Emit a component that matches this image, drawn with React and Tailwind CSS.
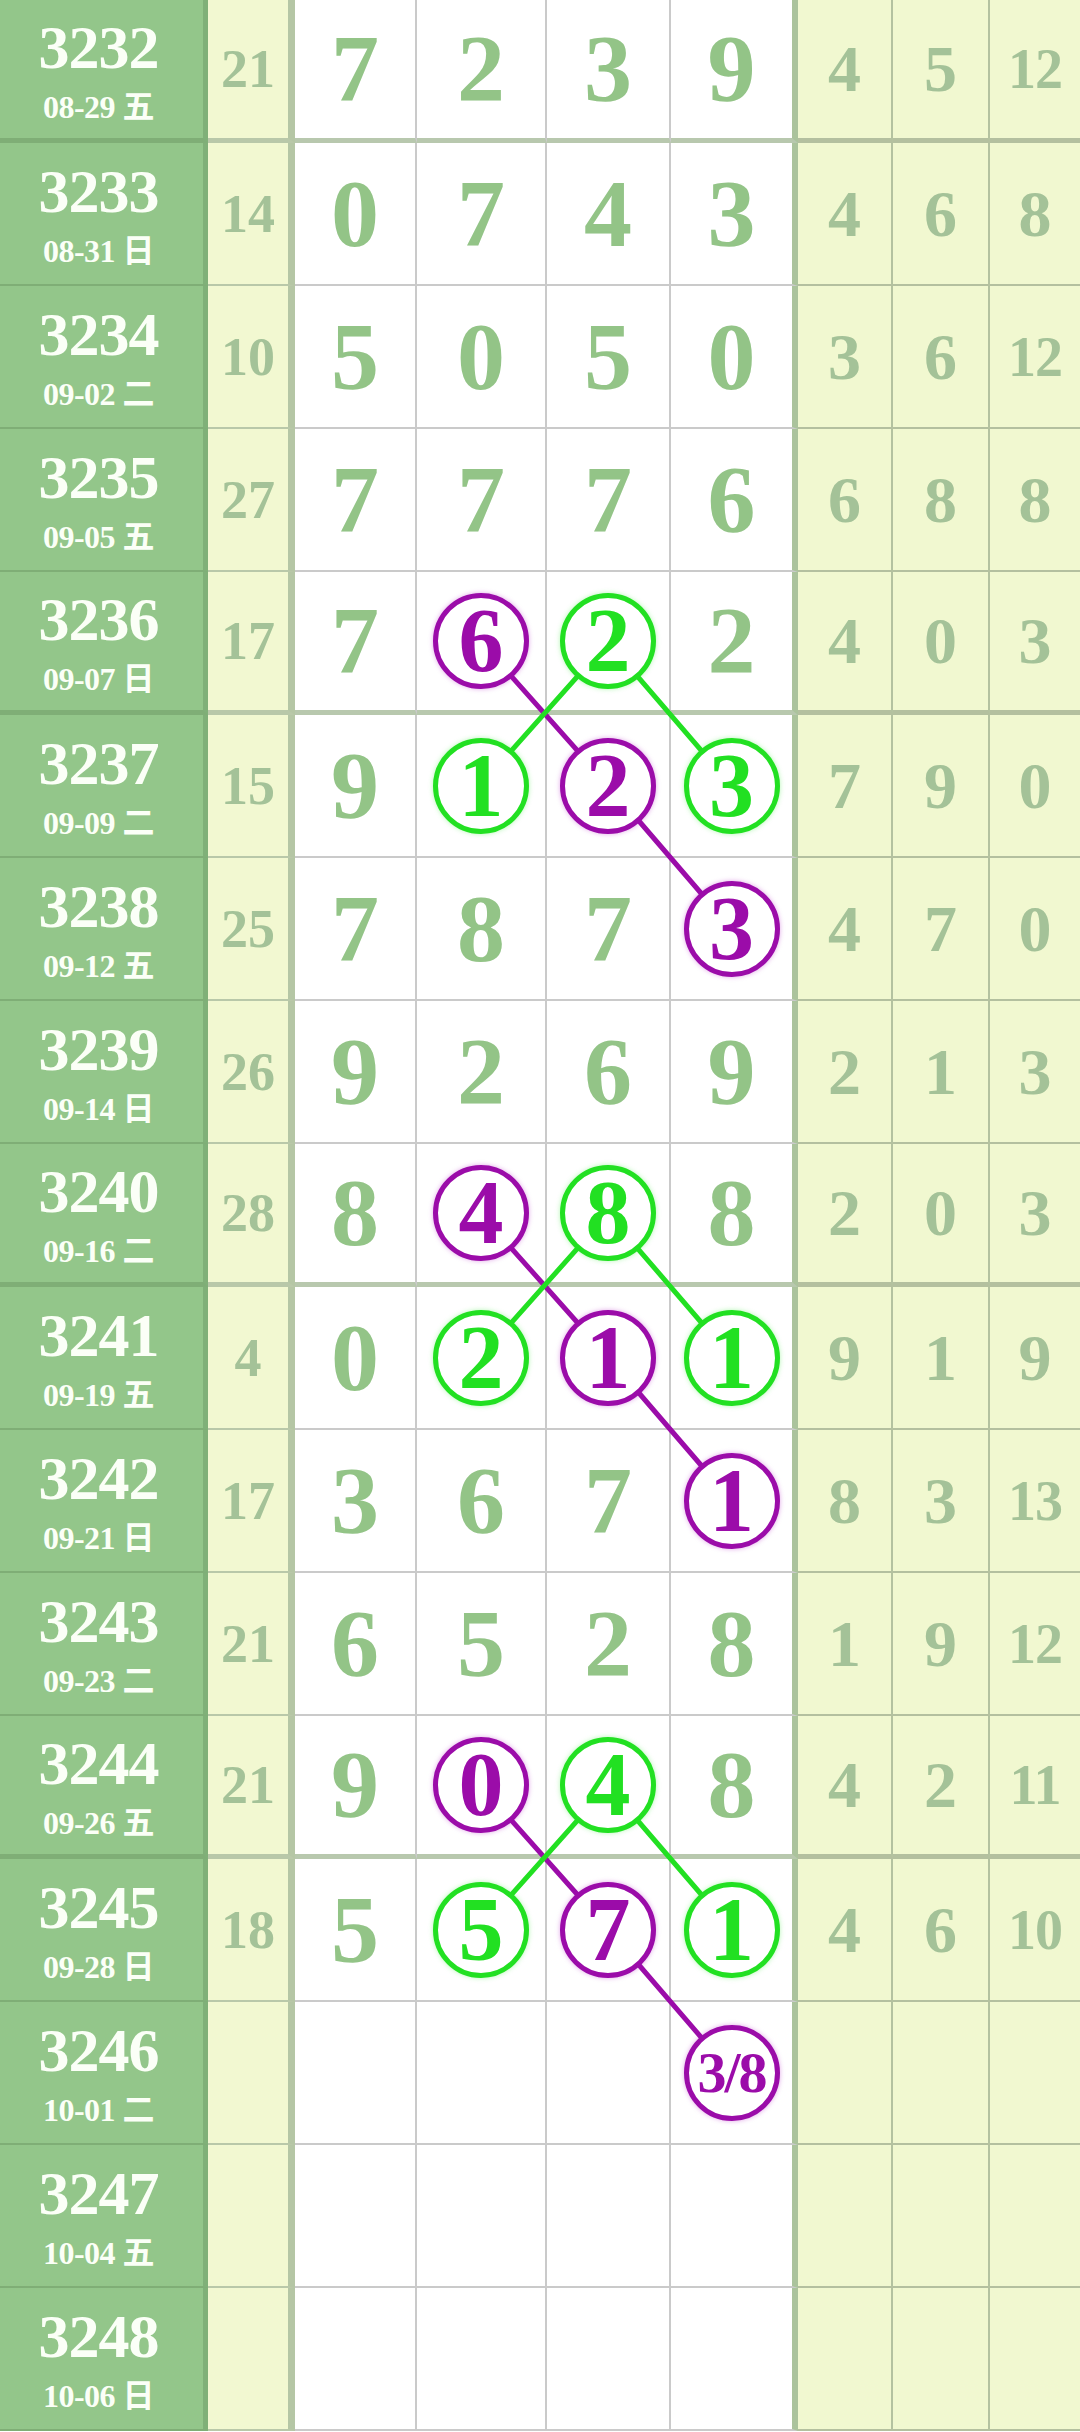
import React from 'react';

const rows = [
  { id: '3232', date: '08-29', wd: '五', sum: 21, d: [7, 2, 3, 9], e: [4, 5, 12] },
  { id: '3233', date: '08-31', wd: '日', sum: 14, d: [0, 7, 4, 3], e: [4, 6, 8] },
  { id: '3234', date: '09-02', wd: '二', sum: 10, d: [5, 0, 5, 0], e: [3, 6, 12] },
  { id: '3235', date: '09-05', wd: '五', sum: 27, d: [7, 7, 7, 6], e: [6, 8, 8] },
  { id: '3236', date: '09-07', wd: '日', sum: 17, d: [7, 6, 2, 2], e: [4, 0, 3] },
  { id: '3237', date: '09-09', wd: '二', sum: 15, d: [9, 1, 2, 3], e: [7, 9, 0] },
  { id: '3238', date: '09-12', wd: '五', sum: 25, d: [7, 8, 7, 3], e: [4, 7, 0] },
  { id: '3239', date: '09-14', wd: '日', sum: 26, d: [9, 2, 6, 9], e: [2, 1, 3] },
  { id: '3240', date: '09-16', wd: '二', sum: 28, d: [8, 4, 8, 8], e: [2, 0, 3] },
  { id: '3241', date: '09-19', wd: '五', sum: 4, d: [0, 2, 1, 1], e: [9, 1, 9] },
  { id: '3242', date: '09-21', wd: '日', sum: 17, d: [3, 6, 7, 1], e: [8, 3, 13] },
  { id: '3243', date: '09-23', wd: '二', sum: 21, d: [6, 5, 2, 8], e: [1, 9, 12] },
  { id: '3244', date: '09-26', wd: '五', sum: 21, d: [9, 0, 4, 8], e: [4, 2, 11] },
  { id: '3245', date: '09-28', wd: '日', sum: 18, d: [5, 5, 7, 1], e: [4, 6, 10] },
  { id: '3246', date: '10-01', wd: '二', sum: null, d: [], e: [] },
  { id: '3247', date: '10-04', wd: '五', sum: null, d: [], e: [] },
  { id: '3248', date: '10-06', wd: '日', sum: null, d: [], e: [] },
];

// circled digits: row-col -> [colour, text]
const marks = {
  '4-1': ['p', '6'], '4-2': ['g', '2'],
  '5-1': ['g', '1'], '5-2': ['p', '2'], '5-3': ['g', '3'],
  '6-3': ['p', '3'],
  '8-1': ['p', '4'], '8-2': ['g', '8'],
  '9-1': ['g', '2'], '9-2': ['p', '1'], '9-3': ['g', '1'],
  '10-3': ['p', '1'],
  '12-1': ['p', '0'], '12-2': ['g', '4'],
  '13-1': ['g', '5'], '13-2': ['p', '7'], '13-3': ['g', '1'],
  '14-3': ['p', '3/8'],
};

const PURPLE = '#9b0ca9';
const GREEN = '#22e022';
const colX = [355, 481, 608, 731];
const rowY = (r) => r * 143 + 70;

const digitCols = [
  'w-[122px] border-r-2 border-r-[#cacaca]',
  'w-[130px] border-r-2 border-r-[#cacaca]',
  'w-[124px] border-r-2 border-r-[#cacaca]',
  'w-[127px] border-r-[6px] border-r-[#abc39c]',
];
const extraCols = [
  'w-[95px] border-r-2 border-r-[#b4c2a0]',
  'w-[97px] border-r-2 border-r-[#b4c2a0]',
  'w-[90px]',
];

function Mark({ kind, text }) {
  const purple = kind === 'p';
  return (
    <div
      className={
        'relative z-[2] flex h-[96px] w-[96px] items-center justify-center rounded-full border-[5px] bg-white leading-none ' +
        (purple
          ? 'border-[#9b0ca9] text-[#9b0ca9] shadow-[0_0_5px_rgba(170,0,190,0.35)]'
          : 'border-[#22e022] text-[#22e022] shadow-[0_0_5px_rgba(40,230,40,0.35)]') +
        (text.length > 1 ? ' text-[58px] tracking-[-2px]' : ' text-[90px]')
      }
    >
      {text}
    </div>
  );
}

function Row({ row, r }) {
  const thick = r % 4 === 0 && r < 13;
  const bw = thick ? 'border-b-[5px]' : 'border-b-2';
  return (
    <div className="flex h-[143px]">
      <div className={`flex w-[208px] flex-col items-center justify-center border-r-[5px] border-r-[#80b078] bg-[#93c68a] pr-[6px] text-[#fbfff7] ${bw} border-b-[#7fae76]`}>
        <div className="text-[62px] leading-none tracking-[-1px]">{row.id}</div>
        <div className="mt-[13px] text-[32px] leading-none tracking-[-0.5px]">
          {row.date} {row.wd}
        </div>
      </div>
      <div className={`flex w-[87px] items-center justify-center border-r-[7px] border-r-[#b5c6a5] bg-[#f2f8d1] text-[54px] leading-none text-[#a4c298] ${bw} border-b-[#b9c8a9]`}>
        {row.sum}
      </div>
      {digitCols.map((cls, c) => {
        const m = marks[`${r}-${c}`];
        return (
          <div
            key={c}
            className={`flex items-center justify-center bg-white text-[96px] leading-none text-[#93c487] ${cls} ${bw} ${thick ? 'border-b-[#b8c8ae]' : 'border-b-[#cacaca]'}`}
          >
            {m ? <Mark kind={m[0]} text={m[1]} /> : row.d[c]}
          </div>
        );
      })}
      {extraCols.map((cls, c) => {
        const v = row.e[c];
        return (
          <div
            key={c}
            className={`flex items-center justify-center bg-[#f1f8d0] leading-none text-[#a4c298] ${v >= 10 ? 'text-[56px] tracking-[-1px]' : 'text-[66px]'} ${cls} ${bw} border-b-[#b4c09f]`}
          >
            {v}
          </div>
        );
      })}
    </div>
  );
}

export default function App() {
  const links = [];
  [4, 8, 12].forEach((r) => {
    links.push({ color: PURPLE, pts: [[r, 1], [r + 1, 2], [r + 2, 3]] });
    links.push({ color: GREEN, pts: [[r + 1, 1], [r, 2], [r + 1, 3]] });
  });

  return (
    <div className="relative w-[1080px] bg-white font-['Liberation_Serif','Noto_Sans_CJK_SC',serif] font-bold">
      <svg className="pointer-events-none absolute left-0 top-0 z-[1]" width="1080" height="2431">
        {links.map((l, i) => (
          <polyline
            key={i}
            points={l.pts.map(([r, c]) => `${colX[c]},${rowY(r)}`).join(' ')}
            fill="none"
            stroke={l.color}
            strokeWidth="5"
          />
        ))}
      </svg>
      {rows.map((row, r) => (
        <Row key={row.id} row={row} r={r} />
      ))}
    </div>
  );
}
